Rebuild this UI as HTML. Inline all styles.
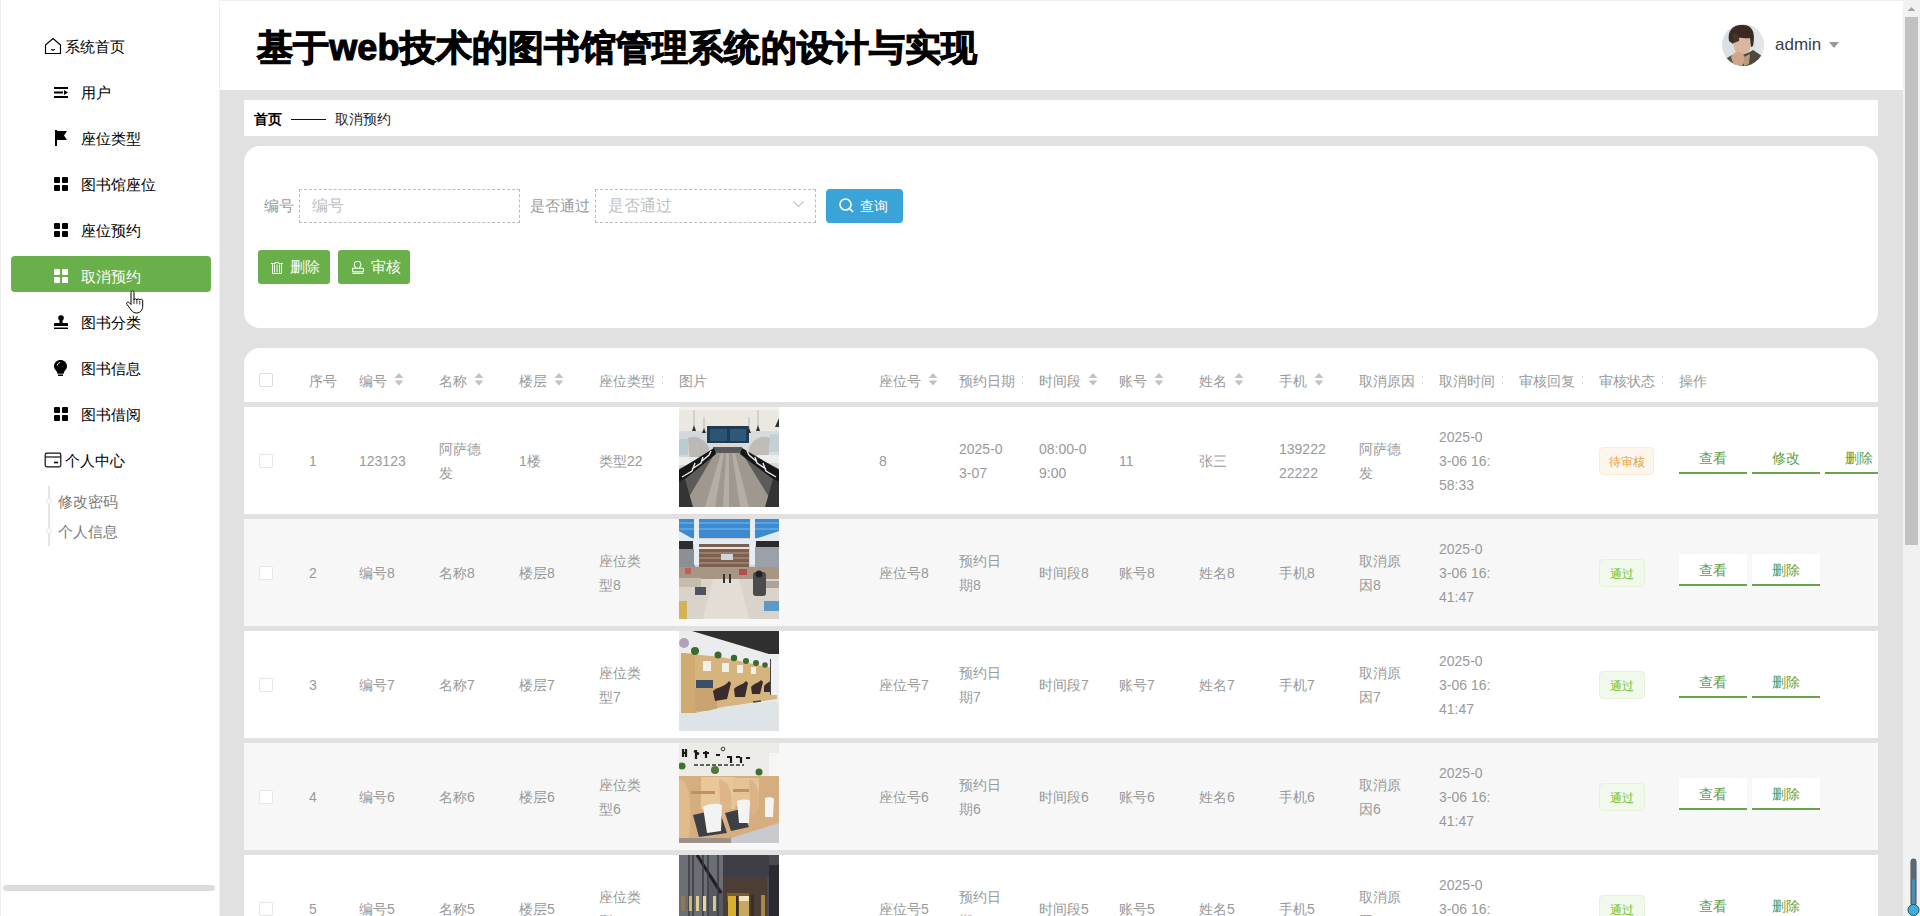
<!DOCTYPE html><html><head><meta charset="utf-8"><style>
*{box-sizing:border-box;margin:0;padding:0}
html,body{width:1920px;height:916px;overflow:hidden;background:#fff;font-family:"Liberation Sans",sans-serif}
.a{position:absolute}
.t{position:absolute;white-space:nowrap}
#side{left:0;top:0;width:220px;height:916px;background:#fff;border-right:1px solid #f0f0f0}
#lline{left:0;top:0;width:1px;height:916px;background:#eee}
#topline{left:0;top:0;width:1903px;height:1px;background:#eee}
#hdr{left:220px;top:1px;width:1683px;height:89px;background:#fff}
#content{left:220px;top:90px;width:1683px;height:826px;background:#e1e1e1}
#sb{left:1903px;top:0;width:17px;height:916px;background:#f1f1f1}
#thumb{left:1905px;top:17px;width:13px;height:528px;background:#c1c1c1}
.title{left:257px;top:24px;font-size:36px;font-weight:bold;color:#000;line-height:48px;-webkit-text-stroke:1.1px #000;letter-spacing:0.1px}
.menu{font-size:15px;color:#000;line-height:20px}
.sub{font-size:15px;color:#7a7a7a;line-height:20px}
.card{background:#fff}
.lbl{font-size:15px;color:#999;line-height:20px}
.ph{font-size:16px;color:#c0c0c0;line-height:20px}
.inp{border:1px dashed #bbb;background:#fff}
.btn{border-radius:3px;color:#fff;font-size:15px;line-height:20px}
.th{font-size:14px;color:#999;line-height:20px}
.td{font-size:14px;color:#999;line-height:24px}
.band{background:#e1e1e1;height:5px;left:244px;width:1634px}
.op{width:68px;height:32px;border-bottom:2px solid #68a24c;font-size:14px;color:#5f9e45;text-align:center;line-height:24px;padding-top:4px}
.tag{height:28px;border-radius:4px;font-size:12px;line-height:26px;padding-top:1px;text-align:center}
</style></head><body>
<div id="topline" class="a"></div>
<div id="side" class="a"></div><div id="lline" class="a"></div>
<div id="hdr" class="a"></div>
<div id="content" class="a"></div>
<div id="sb" class="a"></div><div id="thumb" class="a"></div>
<svg class="a" style="left:1907px;top:6px" width="9" height="6" viewBox="0 0 9 6"><path d="M0.5 5 L4.5 1 L8.5 5 Z" fill="#a3a3a3"/></svg>
<div class="t title">基于web技术的图书馆管理系统的设计与实现</div>
<svg class="a" style="left:1722px;top:24px" width="42" height="42" viewBox="0 0 42 42">
<defs><clipPath id="cav"><circle cx="21" cy="21" r="21"/></clipPath></defs>
<g clip-path="url(#cav)"><rect width="42" height="42" fill="#dae0e5"/>
<path d="M30 0 L42 0 L42 42 L34 42 L34 20Z" fill="#e2e6ea"/>
<path d="M11 14 C11 24 13 31 20 32 C26 32 29 26 29 18 L28 12 L12 12Z" fill="#d9b79f"/>
<path d="M7 17 C5 6 12 0 21 1 C30 1 34 8 31 22 L29 23 L28 14 C24 15 18 13 14 14 L11 20 Z" fill="#3b2a22"/>
<path d="M10 10 C14 8 18 12 17 17 L12 19Z" fill="#4a3428"/>
<path d="M17 42 L20 31 C24 30 28 28 31 26 L40 32 L42 42Z" fill="#4e4a3e"/>
<path d="M3 42 L5 34 L10 31 L14 42Z" fill="#5a5044"/>
<path d="M9 33 C12 27 17 27 21 30 L24 36 L20 42 L12 42Z" fill="#cfa688"/>
<path d="M22 33 L28 30 L27 40 L22 42Z" fill="#b89a80"/>
</g></svg>
<div class="t" style="left:1775px;top:34px;font-size:17px;line-height:22px;color:#383d47">admin</div>
<svg class="a" style="left:1829px;top:42px" width="10" height="6" viewBox="0 0 10 6"><path d="M0 0 L10 0 L5 6 Z" fill="#999"/></svg>
<div class="a" style="left:11px;top:256px;width:200px;height:36px;border-radius:4px;background:#6ab04a"></div>
<svg class="a" style="left:44px;top:37px" width="18" height="18" viewBox="0 0 18 18"><path d="M1.5 8 L9 1.5 L16.5 8 L16.5 16.5 L1.5 16.5 Z" fill="none" stroke="#000" stroke-width="1.15" stroke-linejoin="round"/><path d="M7.2 12.2 L9 13.3 L10.8 12.2" fill="none" stroke="#000" stroke-width="1.1"/></svg>
<div class="t menu" style="left:65px;top:37px">系统首页</div>
<svg class="a" style="left:54px;top:86px" width="14" height="12" viewBox="0 0 14 12" fill="#000"><path d="M0 1h14v2H0zM0 5.5h9v2H0zM0 10h14v2H0zM10 4l4 2.5-4 2.5z" fill="#000"/></svg>
<div class="t menu" style="left:81px;top:83px;color:#000">用户</div>
<svg class="a" style="left:54px;top:130px" width="14" height="16" viewBox="0 0 14 16" fill="#000"><path d="M1 0h2v16H1zM3 1h10l-3 4.5 3 4.5H3z" fill="#000"/></svg>
<div class="t menu" style="left:81px;top:129px;color:#000">座位类型</div>
<svg class="a" style="left:54px;top:177px" width="14" height="14" viewBox="0 0 14 14" fill="#000"><rect x="0" y="0" width="6" height="6" rx="1"/><rect x="8" y="0" width="6" height="6" rx="1"/><rect x="0" y="8" width="6" height="6" rx="1"/><rect x="8" y="8" width="6" height="6" rx="1"/></svg>
<div class="t menu" style="left:81px;top:175px;color:#000">图书馆座位</div>
<svg class="a" style="left:54px;top:223px" width="14" height="14" viewBox="0 0 14 14" fill="#000"><rect x="0" y="0" width="6" height="6" rx="1"/><rect x="8" y="0" width="6" height="6" rx="1"/><rect x="0" y="8" width="6" height="6" rx="1"/><rect x="8" y="8" width="6" height="6" rx="1"/></svg>
<div class="t menu" style="left:81px;top:221px;color:#000">座位预约</div>
<svg class="a" style="left:54px;top:269px" width="14" height="14" viewBox="0 0 14 14" fill="#fff"><rect x="0" y="0" width="6" height="6" rx="1"/><rect x="8" y="0" width="6" height="6" rx="1"/><rect x="0" y="8" width="6" height="6" rx="1"/><rect x="8" y="8" width="6" height="6" rx="1"/></svg>
<div class="t menu" style="left:81px;top:267px;color:#fff">取消预约</div>
<svg class="a" style="left:54px;top:315px" width="14" height="14" viewBox="0 0 14 14" fill="#000"><circle cx="7" cy="3" r="2.8"/><path d="M5.5 4h3v4h4.5a1 1 0 0 1 1 1v2H0V9a1 1 0 0 1 1-1h4.5z"/><rect x="0" y="12.5" width="14" height="1.5"/></svg>
<div class="t menu" style="left:81px;top:313px;color:#000">图书分类</div>
<svg class="a" style="left:54px;top:360px" width="13" height="16" viewBox="0 0 13 16" fill="#000"><path d="M6.5 0C3 0 0 2.7 0 6.3c0 2.3 1.3 3.6 2.3 4.8.7.8 1 1.8 1 2.6h6.4c0-.8.3-1.8 1-2.6 1-1.2 2.3-2.5 2.3-4.8C13 2.7 10 0 6.5 0z"/><rect x="4" y="14.5" width="5" height="1.5"/><path d="M3.2 5.5c.3-1.7 1.6-2.8 3-3" stroke="#fff" stroke-width="1" fill="none"/></svg>
<div class="t menu" style="left:81px;top:359px;color:#000">图书信息</div>
<svg class="a" style="left:54px;top:407px" width="14" height="14" viewBox="0 0 14 14" fill="#000"><rect x="0" y="0" width="6" height="6" rx="1"/><rect x="8" y="0" width="6" height="6" rx="1"/><rect x="0" y="8" width="6" height="6" rx="1"/><rect x="8" y="8" width="6" height="6" rx="1"/></svg>
<div class="t menu" style="left:81px;top:405px;color:#000">图书借阅</div>
<svg class="a" style="left:44px;top:452px" width="18" height="16" viewBox="0 0 18 16"><rect x="1.2" y="1.2" width="15.6" height="13.6" rx="1.5" fill="none" stroke="#111" stroke-width="1.2"/><path d="M1.2 5h15.6" stroke="#111" stroke-width="1.2"/><path d="M10 10.5h4" stroke="#000" stroke-width="1.6"/></svg>
<div class="t menu" style="left:65px;top:451px">个人中心</div>
<div class="a" style="left:48px;top:486px;width:2px;height:60px;background:#e4e4e4"></div>
<div class="a" style="left:46px;top:498px;width:6px;height:6px;border-radius:3px;background:#fff;border:1px solid #e6e6e6"></div>
<div class="a" style="left:46px;top:528px;width:6px;height:6px;border-radius:3px;background:#fff;border:1px solid #e6e6e6"></div>
<div class="t sub" style="left:58px;top:492px">修改密码</div>
<div class="t sub" style="left:58px;top:522px">个人信息</div>
<div class="a" style="left:3px;top:885px;width:212px;height:6px;border-radius:3px;background:#dcdcdc"></div>
<div class="a card" style="left:244px;top:100px;width:1634px;height:36px"></div>
<div class="t" style="left:254px;top:109px;font-size:14px;line-height:20px;font-weight:bold;color:#000">首页</div>
<div class="a" style="left:291px;top:119px;width:35px;height:1px;background:#111"></div>
<div class="t" style="left:335px;top:109px;font-size:14px;line-height:20px;color:#222">取消预约</div>
<div class="a card" style="left:244px;top:146px;width:1634px;height:182px;border-radius:16px"></div>
<div class="t lbl" style="left:264px;top:196px">编号</div>
<div class="a inp" style="left:299px;top:189px;width:221px;height:34px"></div>
<div class="t ph" style="left:312px;top:196px">编号</div>
<div class="t lbl" style="left:530px;top:196px">是否通过</div>
<div class="a inp" style="left:595px;top:189px;width:221px;height:34px"></div>
<div class="t ph" style="left:608px;top:196px">是否通过</div>
<svg class="a" style="left:793px;top:201px" width="11" height="7" viewBox="0 0 11 7"><path d="M0.5 0.5 L5.5 5.5 L10.5 0.5" fill="none" stroke="#c0c4cc" stroke-width="1.2"/></svg>
<div class="a btn" style="left:826px;top:189px;width:77px;height:34px;background:#3aa3d8;border-radius:4px"></div>
<svg class="a" style="left:839px;top:198px" width="15" height="15" viewBox="0 0 15 15"><circle cx="6.5" cy="6.5" r="5.5" fill="none" stroke="#fff" stroke-width="1.6"/><path d="M10.5 10.5 L14 14" stroke="#fff" stroke-width="1.6"/></svg>
<div class="t" style="left:860px;top:196px;font-size:14px;line-height:20px;color:#fff">查询</div>
<div class="a btn" style="left:258px;top:250px;width:72px;height:34px;background:#6ab04a"></div>
<svg class="a" style="left:271px;top:262px" width="12" height="12" viewBox="0 0 12 12" fill="none" stroke="#f4fff0" stroke-width="1"><path d="M0 1.5H4.5V0.5H7.5V1.5H12M1.5 2V11.5H10.5V2M3.5 2.5V10.5M6 2.5V10.5M8.5 2.5V10.5"/></svg>
<div class="t" style="left:290px;top:257px;font-size:15px;line-height:20px;color:#fff">删除</div>
<div class="a btn" style="left:338px;top:250px;width:72px;height:34px;background:#6ab04a"></div>
<svg class="a" style="left:352px;top:261px" width="12" height="13" viewBox="0 0 12 13" fill="none" stroke="#f4fff0" stroke-width="1.1"><path d="M4 7.2C2.6 5.6 2.3 4.6 2.3 3.6A3.3 3.3 0 0 1 8.9 3.6C8.9 4.6 8.6 5.6 7.2 7.2M0.6 7.2H11.4V10.8H0.6ZM0.5 12.4H11.5"/></svg>
<div class="t" style="left:371px;top:257px;font-size:15px;line-height:20px;color:#fff">审核</div>
<div class="a card" style="left:244px;top:348px;width:1634px;height:600px;border-radius:16px 16px 0 0"></div>
<div class="t th" style="left:309px;top:371px">序号</div>
<div class="t th" style="left:359px;top:371px">编号</div>
<svg class="a" style="left:394px;top:373px" width="10" height="13" viewBox="0 0 10 13" fill="#c2c2c2"><path d="M5 0 L9.5 5 H0.5Z M5 12.5 L0.5 7.5 H9.5Z"/></svg>
<div class="t th" style="left:439px;top:371px">名称</div>
<svg class="a" style="left:474px;top:373px" width="10" height="13" viewBox="0 0 10 13" fill="#c2c2c2"><path d="M5 0 L9.5 5 H0.5Z M5 12.5 L0.5 7.5 H9.5Z"/></svg>
<div class="t th" style="left:519px;top:371px">楼层</div>
<svg class="a" style="left:554px;top:373px" width="10" height="13" viewBox="0 0 10 13" fill="#c2c2c2"><path d="M5 0 L9.5 5 H0.5Z M5 12.5 L0.5 7.5 H9.5Z"/></svg>
<div class="t th" style="left:599px;top:371px">座位类型</div>
<div class="a" style="left:662px;top:376px;width:1px;height:2px;background:#d6d6d6"></div><div class="a" style="left:662px;top:382px;width:1px;height:2px;background:#d6d6d6"></div>
<div class="t th" style="left:679px;top:371px">图片</div>
<div class="t th" style="left:879px;top:371px">座位号</div>
<svg class="a" style="left:928px;top:373px" width="10" height="13" viewBox="0 0 10 13" fill="#c2c2c2"><path d="M5 0 L9.5 5 H0.5Z M5 12.5 L0.5 7.5 H9.5Z"/></svg>
<div class="t th" style="left:959px;top:371px">预约日期</div>
<div class="a" style="left:1022px;top:376px;width:1px;height:2px;background:#d6d6d6"></div><div class="a" style="left:1022px;top:382px;width:1px;height:2px;background:#d6d6d6"></div>
<div class="t th" style="left:1039px;top:371px">时间段</div>
<svg class="a" style="left:1088px;top:373px" width="10" height="13" viewBox="0 0 10 13" fill="#c2c2c2"><path d="M5 0 L9.5 5 H0.5Z M5 12.5 L0.5 7.5 H9.5Z"/></svg>
<div class="t th" style="left:1119px;top:371px">账号</div>
<svg class="a" style="left:1154px;top:373px" width="10" height="13" viewBox="0 0 10 13" fill="#c2c2c2"><path d="M5 0 L9.5 5 H0.5Z M5 12.5 L0.5 7.5 H9.5Z"/></svg>
<div class="t th" style="left:1199px;top:371px">姓名</div>
<svg class="a" style="left:1234px;top:373px" width="10" height="13" viewBox="0 0 10 13" fill="#c2c2c2"><path d="M5 0 L9.5 5 H0.5Z M5 12.5 L0.5 7.5 H9.5Z"/></svg>
<div class="t th" style="left:1279px;top:371px">手机</div>
<svg class="a" style="left:1314px;top:373px" width="10" height="13" viewBox="0 0 10 13" fill="#c2c2c2"><path d="M5 0 L9.5 5 H0.5Z M5 12.5 L0.5 7.5 H9.5Z"/></svg>
<div class="t th" style="left:1359px;top:371px">取消原因</div>
<div class="a" style="left:1422px;top:376px;width:1px;height:2px;background:#d6d6d6"></div><div class="a" style="left:1422px;top:382px;width:1px;height:2px;background:#d6d6d6"></div>
<div class="t th" style="left:1439px;top:371px">取消时间</div>
<div class="a" style="left:1502px;top:376px;width:1px;height:2px;background:#d6d6d6"></div><div class="a" style="left:1502px;top:382px;width:1px;height:2px;background:#d6d6d6"></div>
<div class="t th" style="left:1519px;top:371px">审核回复</div>
<div class="a" style="left:1582px;top:376px;width:1px;height:2px;background:#d6d6d6"></div><div class="a" style="left:1582px;top:382px;width:1px;height:2px;background:#d6d6d6"></div>
<div class="t th" style="left:1599px;top:371px">审核状态</div>
<div class="a" style="left:1662px;top:376px;width:1px;height:2px;background:#d6d6d6"></div><div class="a" style="left:1662px;top:382px;width:1px;height:2px;background:#d6d6d6"></div>
<div class="t th" style="left:1679px;top:371px">操作</div>
<div class="a" style="left:259px;top:373px;width:14px;height:14px;border:1px solid #dcdcdc;border-radius:2px;background:#fff"></div>
<div class="a band" style="top:402px"></div>
<div class="a" style="left:244px;top:407px;width:1634px;height:107px;background:#fff"></div>
<div class="a" style="left:259px;top:454px;width:14px;height:14px;border:1px solid #e6e6e6;border-radius:2px;background:#fff"></div>
<div class="t td" style="left:309px;top:449px">1</div>
<div class="t td" style="left:359px;top:449px">123123</div>
<div class="t td" style="left:439px;top:437px">阿萨德<br>发</div>
<div class="t td" style="left:519px;top:449px">1楼</div>
<div class="t td" style="left:599px;top:449px">类型22</div>
<div class="t td" style="left:879px;top:449px">8</div>
<div class="t td" style="left:959px;top:437px">2025-0<br>3-07</div>
<div class="t td" style="left:1039px;top:437px">08:00-0<br>9:00</div>
<div class="t td" style="left:1119px;top:449px">11</div>
<div class="t td" style="left:1199px;top:449px">张三</div>
<div class="t td" style="left:1279px;top:437px">139222<br>22222</div>
<div class="t td" style="left:1359px;top:437px">阿萨德<br>发</div>
<div class="t td" style="left:1439px;top:425px">2025-0<br>3-06 16:<br>58:33</div>
<div class="a" id="img0" style="left:679px;top:407px;width:100px;height:100px;overflow:hidden"><svg width="100" height="100" viewBox="0 0 100 100">
<rect width="100" height="100" fill="#d9dbdb"/>
<rect width="100" height="24" fill="#ebe8e2"/>
<rect width="100" height="3" fill="#f4f2ee"/>
<path d="M0 24 L28 24 L30 60 L0 64Z" fill="#d2d8db"/>
<path d="M100 24 L70 24 L70 60 L100 64Z" fill="#d6dbdd"/>
<path d="M9 31 C17 27 27 33 30 41 L30 54 L11 58Z" fill="#bcb9b4"/>
<path d="M91 31 C83 27 73 33 70 41 L70 54 L89 58Z" fill="#c0bdb8"/>
<rect x="0" y="32" width="9" height="16" fill="#bccad2"/><rect x="91" y="27" width="9" height="18" fill="#c4d0d6"/>
<rect x="0" y="50" width="22" height="8" fill="#eceeee"/><rect x="78" y="48" width="22" height="8" fill="#eceeee"/>
<rect x="28" y="19" width="42" height="17" fill="#1d3b55"/>
<rect x="31" y="22" width="17" height="12" fill="#2b5472"/><rect x="51" y="22" width="16" height="12" fill="#2d5877"/>
<rect x="34" y="36" width="29" height="5" fill="#dcd8d0"/>
<rect x="34" y="40" width="29" height="6" fill="#55595c"/>
<path d="M0 62 L34 44 L66 44 L100 62 L100 100 L0 100Z" fill="#5c5b59"/>
<path d="M36 46 L63 46 L96 100 L4 100Z" fill="#9e988f"/>
<path d="M42 46 L45 46 L36 100 L26 100Z M53 46 L56 46 L70 100 L61 100Z M47 46 L50 46 L50 100 L44 100Z" fill="#b4aea5"/>
<path d="M35 41 L0 63 L0 75 L6 72 L37 47Z" fill="#161616"/>
<path d="M63 41 L100 63 L100 75 L94 72 L61 47Z" fill="#161616"/>
<path d="M3 70 L13 64 L16 56 M13 62 L22 56 L24 50 M23 54 L30 48 L32 44" stroke="#ececec" stroke-width="1.4" fill="none"/>
<path d="M97 70 L87 64 L84 56 M87 62 L78 56 L76 50 M77 54 L70 48 L68 44" stroke="#ececec" stroke-width="1.4" fill="none"/>
<path d="M0 75 L6 72 L14 100 L0 100Z" fill="#343434"/><path d="M100 75 L94 72 L86 100 L100 100Z" fill="#343434"/>
<path d="M15 3V19M25 10V22M79 3V19M70 10V22" stroke="#8a8680" stroke-width="0.5"/>
<path d="M13 24 L15 18 L17 24Z M23 26 L25 21 L27 26Z M77 24 L79 18 L81 24Z M68 26 L70 21 L72 26Z M96 20 L100 11 L100 20Z" fill="#2e2e2e"/>
</svg></div>
<div class="t tag" style="left:1599px;width:55px;top:447px;background:#fdf6ec;border:1px solid #faecd8;color:#e6a23c">待审核</div>
<div class="t op" style="left:1679px;top:442px;background:#fff">查看</div>
<div class="t op" style="left:1752px;top:442px;background:#fff">修改</div>
<div class="t op" style="left:1825px;top:442px;background:#fff">删除</div>
<div class="a band" style="top:514px"></div>
<div class="a" style="left:244px;top:519px;width:1634px;height:107px;background:#f7f7f7"></div>
<div class="a" style="left:259px;top:566px;width:14px;height:14px;border:1px solid #e6e6e6;border-radius:2px;background:#fff"></div>
<div class="t td" style="left:309px;top:561px">2</div>
<div class="t td" style="left:359px;top:561px">编号8</div>
<div class="t td" style="left:439px;top:561px">名称8</div>
<div class="t td" style="left:519px;top:561px">楼层8</div>
<div class="t td" style="left:599px;top:549px">座位类<br>型8</div>
<div class="t td" style="left:879px;top:561px">座位号8</div>
<div class="t td" style="left:959px;top:549px">预约日<br>期8</div>
<div class="t td" style="left:1039px;top:561px">时间段8</div>
<div class="t td" style="left:1119px;top:561px">账号8</div>
<div class="t td" style="left:1199px;top:561px">姓名8</div>
<div class="t td" style="left:1279px;top:561px">手机8</div>
<div class="t td" style="left:1359px;top:549px">取消原<br>因8</div>
<div class="t td" style="left:1439px;top:537px">2025-0<br>3-06 16:<br>41:47</div>
<div class="a" id="img1" style="left:679px;top:519px;width:100px;height:100px;overflow:hidden"><svg width="100" height="100" viewBox="0 0 100 100">
<rect width="100" height="100" fill="#d5d0c8"/>
<rect width="100" height="19" fill="#3d8ad0"/>
<path d="M0 4h100M0 10h100" stroke="#5aa2e0" stroke-width="2"/>
<path d="M0 12 L14 20 L76 20 L100 12 L100 26 L76 25 L14 25 L0 24Z" fill="#e2eaf2"/>
<rect x="0" y="22" width="14" height="8" fill="#2e2e30"/><rect x="77" y="22" width="23" height="8" fill="#2a2a2c"/>
<rect x="0" y="30" width="16" height="22" fill="#8c9096"/><rect x="76" y="28" width="24" height="22" fill="#9aa1a8"/>
<rect x="20" y="25" width="50" height="25" fill="#7b6153"/>
<path d="M20 29h50" stroke="#e8e2d8" stroke-width="2"/>
<path d="M20 34h50M20 39h50M20 44h50" stroke="#a8876e" stroke-width="1.6"/>
<rect x="42" y="35" width="12" height="6" fill="#cfd6dc"/>
<rect x="15" y="0" width="5" height="46" fill="#e6edf4"/><rect x="71" y="0" width="5" height="46" fill="#e6edf4"/>
<rect x="0" y="48" width="100" height="12" fill="#a89684"/>
<rect x="6" y="49" width="6" height="6" fill="#c06050"/><rect x="60" y="50" width="8" height="6" fill="#b05048"/>
<rect x="0" y="60" width="100" height="40" fill="#d9d3c9"/>
<path d="M34 60 L60 60 L70 100 L24 100Z" fill="#e3ded5"/>
<rect x="0" y="59" width="22" height="9" fill="#c4bcac"/>
<rect x="16" y="68" width="11" height="8" fill="#4c5262"/>
<rect x="44" y="55" width="2" height="9" fill="#333"/><rect x="50" y="55" width="2" height="9" fill="#333"/>
<rect x="74" y="53" width="13" height="24" rx="3" fill="#4c4b4c"/>
<circle cx="80" cy="55" r="3.5" fill="#222"/>
<rect x="87" y="62" width="13" height="7" fill="#a8a49e"/>
<rect x="85" y="82" width="15" height="10" fill="#5a9ac8"/>
<rect x="0" y="82" width="8" height="18" fill="#d4b258"/>
</svg></div>
<div class="t tag" style="left:1599px;width:46px;top:559px;background:#f0f9eb;border:1px solid #e1f3d8;color:#67c23a">通过</div>
<div class="t op" style="left:1679px;top:554px;background:#fff">查看</div>
<div class="t op" style="left:1752px;top:554px;background:#fff">删除</div>
<div class="a band" style="top:626px"></div>
<div class="a" style="left:244px;top:631px;width:1634px;height:107px;background:#fff"></div>
<div class="a" style="left:259px;top:678px;width:14px;height:14px;border:1px solid #e6e6e6;border-radius:2px;background:#fff"></div>
<div class="t td" style="left:309px;top:673px">3</div>
<div class="t td" style="left:359px;top:673px">编号7</div>
<div class="t td" style="left:439px;top:673px">名称7</div>
<div class="t td" style="left:519px;top:673px">楼层7</div>
<div class="t td" style="left:599px;top:661px">座位类<br>型7</div>
<div class="t td" style="left:879px;top:673px">座位号7</div>
<div class="t td" style="left:959px;top:661px">预约日<br>期7</div>
<div class="t td" style="left:1039px;top:673px">时间段7</div>
<div class="t td" style="left:1119px;top:673px">账号7</div>
<div class="t td" style="left:1199px;top:673px">姓名7</div>
<div class="t td" style="left:1279px;top:673px">手机7</div>
<div class="t td" style="left:1359px;top:661px">取消原<br>因7</div>
<div class="t td" style="left:1439px;top:649px">2025-0<br>3-06 16:<br>41:47</div>
<div class="a" id="img2" style="left:679px;top:631px;width:100px;height:100px;overflow:hidden"><svg width="100" height="100" viewBox="0 0 100 100">
<rect width="100" height="100" fill="#eaecee"/>
<path d="M13 0 L100 0 L100 23 L90 23 Z" fill="#2f2f2f"/>
<circle cx="5" cy="12" r="5" fill="#b0a0b8"/>
<path d="M2 22 L42 26 L98 38 L98 68 L45 76 L2 85Z" fill="#d6b47e"/>
<path d="M2 22 L16 23 L16 85 L2 85Z" fill="#cfab72"/>
<path d="M24 30h8v10h-8zM43 32h7v9h-7zM58 34h6v8h-6zM72 36h5v7h-5z" fill="#f2efe8"/>
<path d="M17 49h17v8h-17z" fill="#3a5068"/>
<rect x="16" y="57" width="22" height="23" fill="#c9a470"/>
<circle cx="16" cy="20" r="4" fill="#3d6a2c"/><circle cx="39" cy="24" r="3.5" fill="#3d6a2c"/><circle cx="55" cy="27" r="3.2" fill="#3d6a2c"/><circle cx="67" cy="30" r="3" fill="#3d6a2c"/><circle cx="77" cy="32" r="3" fill="#3d6a2c"/><circle cx="86" cy="34" r="2.8" fill="#3d6a2c"/>
<path d="M34 60 C38 56 46 56 50 50 L52 52 L48 68 L36 70Z" fill="#3a2c2c"/>
<path d="M55 58 C58 54 64 54 67 50 L69 52 L66 66 L56 66Z" fill="#3a2c2c"/>
<path d="M72 56 C75 52 80 52 82 49 L84 51 L81 63 L73 63Z" fill="#3a2c2c"/>
<path d="M85 55 C87 52 90 52 92 49 L93 51 L91 61 L85 61Z" fill="#3a2c2c"/>
<path d="M32 82 L52 80 M58 76 L70 75 M74 71 L82 70" stroke="#444" stroke-width="1.5"/>
<rect x="0" y="82" width="100" height="18" fill="#dde3e6"/>
<path d="M45 76 L96 70 L100 72 L100 82 L2 86Z" fill="#dfe4e7"/>
<rect x="91" y="28" width="9" height="36" fill="#f0f0f2"/><rect x="91" y="28" width="1" height="36" fill="#444"/>
</svg></div>
<div class="t tag" style="left:1599px;width:46px;top:671px;background:#f0f9eb;border:1px solid #e1f3d8;color:#67c23a">通过</div>
<div class="t op" style="left:1679px;top:666px;background:#fff">查看</div>
<div class="t op" style="left:1752px;top:666px;background:#fff">删除</div>
<div class="a band" style="top:738px"></div>
<div class="a" style="left:244px;top:743px;width:1634px;height:107px;background:#f7f7f7"></div>
<div class="a" style="left:259px;top:790px;width:14px;height:14px;border:1px solid #e6e6e6;border-radius:2px;background:#fff"></div>
<div class="t td" style="left:309px;top:785px">4</div>
<div class="t td" style="left:359px;top:785px">编号6</div>
<div class="t td" style="left:439px;top:785px">名称6</div>
<div class="t td" style="left:519px;top:785px">楼层6</div>
<div class="t td" style="left:599px;top:773px">座位类<br>型6</div>
<div class="t td" style="left:879px;top:785px">座位号6</div>
<div class="t td" style="left:959px;top:773px">预约日<br>期6</div>
<div class="t td" style="left:1039px;top:785px">时间段6</div>
<div class="t td" style="left:1119px;top:785px">账号6</div>
<div class="t td" style="left:1199px;top:785px">姓名6</div>
<div class="t td" style="left:1279px;top:785px">手机6</div>
<div class="t td" style="left:1359px;top:773px">取消原<br>因6</div>
<div class="t td" style="left:1439px;top:761px">2025-0<br>3-06 16:<br>41:47</div>
<div class="a" id="img3" style="left:679px;top:743px;width:100px;height:100px;overflow:hidden"><svg width="100" height="100" viewBox="0 0 100 100">
<rect width="100" height="100" fill="#ecebe8"/>
<g stroke="#1a1a1a" stroke-width="2.2" fill="none">
<path d="M4 6v8M7 6v8M4 10h3M15 8l5 3M17 7v9M24 10h6M27 8v7M37 12h4M48 14h5M52 14v6M57 14h4M62 14v6M67 15h4"/>
</g>
<path d="M15 22h50" stroke="#333" stroke-width="1.4" stroke-dasharray="4 2"/>
<circle cx="44" cy="6" r="1.8" fill="none" stroke="#333" stroke-width="1"/>
<rect x="90" y="10" width="10" height="28" fill="#f6f6f4"/>
<circle cx="3" cy="23" r="3.5" fill="#3a7030"/><circle cx="36" cy="27" r="4" fill="#4a7a36"/><circle cx="80" cy="29" r="3.5" fill="#3a7030"/>
<rect x="0" y="33" width="100" height="62" fill="#d6ad7e"/>
<rect x="22" y="34" width="34" height="32" fill="#e8c89a"/><rect x="54" y="35" width="26" height="28" fill="#e4c496"/>
<rect x="12" y="48" width="24" height="3" fill="#c09060"/><rect x="54" y="46" width="16" height="3" fill="#c09060"/>
<path d="M0 36 C10 36 14 60 10 95 L0 95Z" fill="#e2bb8a"/>
<path d="M40 36 C56 40 56 66 46 80 L42 80Z" fill="#deb586"/>
<path d="M70 36 C82 40 82 62 76 72 L72 72Z" fill="#dcb384"/>
<path d="M14 72 L40 66 L48 90 L20 94Z" fill="#3c3f44"/>
<path d="M46 70 L62 66 L70 84 L52 88Z" fill="#3c3f44"/>
<path d="M24 64 C30 60 40 60 43 62 L42 88 L28 90 Z" fill="#f3f3f3"/>
<path d="M58 58 C62 56 70 56 71 58 L70 80 L60 80Z" fill="#f3f3f3"/>
<path d="M86 55 C88 54 94 54 95 56 L94 74 L86 74Z" fill="#f3f3f3"/>
<path d="M52 95 L100 80 L100 100 L40 100Z" fill="#c8cacf"/>
<rect x="0" y="95" width="52" height="5" fill="#9c9088"/>
</svg></div>
<div class="t tag" style="left:1599px;width:46px;top:783px;background:#f0f9eb;border:1px solid #e1f3d8;color:#67c23a">通过</div>
<div class="t op" style="left:1679px;top:778px;background:#fff">查看</div>
<div class="t op" style="left:1752px;top:778px;background:#fff">删除</div>
<div class="a band" style="top:850px"></div>
<div class="a" style="left:244px;top:855px;width:1634px;height:107px;background:#fff"></div>
<div class="a" style="left:259px;top:902px;width:14px;height:14px;border:1px solid #e6e6e6;border-radius:2px;background:#fff"></div>
<div class="t td" style="left:309px;top:897px">5</div>
<div class="t td" style="left:359px;top:897px">编号5</div>
<div class="t td" style="left:439px;top:897px">名称5</div>
<div class="t td" style="left:519px;top:897px">楼层5</div>
<div class="t td" style="left:599px;top:885px">座位类<br>型5</div>
<div class="t td" style="left:879px;top:897px">座位号5</div>
<div class="t td" style="left:959px;top:885px">预约日<br>期5</div>
<div class="t td" style="left:1039px;top:897px">时间段5</div>
<div class="t td" style="left:1119px;top:897px">账号5</div>
<div class="t td" style="left:1199px;top:897px">姓名5</div>
<div class="t td" style="left:1279px;top:897px">手机5</div>
<div class="t td" style="left:1359px;top:885px">取消原<br>因5</div>
<div class="t td" style="left:1439px;top:873px">2025-0<br>3-06 16:<br>41:47</div>
<div class="a" id="img4" style="left:679px;top:855px;width:100px;height:100px;overflow:hidden"><svg width="100" height="100" viewBox="0 0 100 100">
<rect width="100" height="100" fill="#4a4b52"/>
<rect x="0" y="0" width="45" height="100" fill="#6c6e76"/>
<path d="M18 0 L44 36 L44 100 L30 100 L30 20Z" fill="#585a62"/>
<path d="M18 0 L42 38" stroke="#1e1e22" stroke-width="3"/>
<path d="M10 0V100M14 0V100M24 0V100M29 0V100M39 0V100" stroke="#3a3b42" stroke-width="1.5"/>
<rect x="44" y="0" width="46" height="22" fill="#3e3f46"/>
<rect x="44" y="22" width="44" height="78" fill="#4c3e34"/>
<rect x="48" y="38" width="22" height="8" fill="#7a5a30"/>
<rect x="49" y="41" width="8" height="20" fill="#d8b030"/>
<rect x="60" y="41" width="10" height="5" fill="#f2e6c0"/><rect x="60" y="46" width="10" height="15" fill="#c8a860"/>
<rect x="57" y="41" width="2" height="20" fill="#3a2a20"/><rect x="72" y="40" width="3" height="21" fill="#3a2e28"/>
<rect x="82" y="40" width="4" height="21" fill="#a88848"/>
<rect x="90" y="10" width="10" height="90" fill="#2a2a30"/>
<rect x="10" y="41" width="3" height="15" fill="#c8b870"/><rect x="17" y="41" width="3" height="15" fill="#e0d090"/><rect x="24" y="41" width="3" height="15" fill="#e8d898"/><rect x="34" y="41" width="3" height="15" fill="#d8c888"/>
<rect x="2" y="41" width="4" height="15" fill="#8a7a58"/>
</svg></div>
<div class="t tag" style="left:1599px;width:46px;top:895px;background:#f0f9eb;border:1px solid #e1f3d8;color:#67c23a">通过</div>
<div class="t op" style="left:1679px;top:890px;background:#fff">查看</div>
<div class="t op" style="left:1752px;top:890px;background:#fff">删除</div>
<div class="a" style="left:1878px;top:348px;width:25px;height:568px;background:#e1e1e1"></div>
<svg class="a" style="left:125px;top:290px" width="20" height="24" viewBox="0 0 20 24"><path d="M6 2.5c0-1 .7-1.7 1.5-1.7S9 1.5 9 2.5V10c.2-.9.8-1.3 1.5-1.3s1.3.5 1.4 1.4c.2-.8.8-1.2 1.5-1.2s1.3.5 1.4 1.3c.2-.7.8-1 1.4-1 .8 0 1.5.7 1.5 1.6v5.5c0 3.5-2.3 6.7-6 6.7-2.5 0-4-1-5.5-3L2 14.5c-.6-.8-.4-1.8.3-2.2.7-.4 1.5-.2 2 .4L6 14.5z" fill="#fff" stroke="#000" stroke-width="1"/><path d="M9 10v4M11.9 10v4M14.8 11v3.5" stroke="#000" stroke-width="0.8"/></svg>
<svg class="a" style="left:1907px;top:858px" width="13" height="58" viewBox="0 0 13 58"><rect x="4" y="1" width="5" height="47" rx="2.5" fill="#4a8fb0" stroke="#3c4a55" stroke-width="1"/><rect x="4.5" y="1.5" width="4" height="20" fill="#5a6a75"/><circle cx="6.5" cy="52" r="5.5" fill="#3eb0e0" stroke="#2c4f66" stroke-width="1"/></svg>
</body></html>
